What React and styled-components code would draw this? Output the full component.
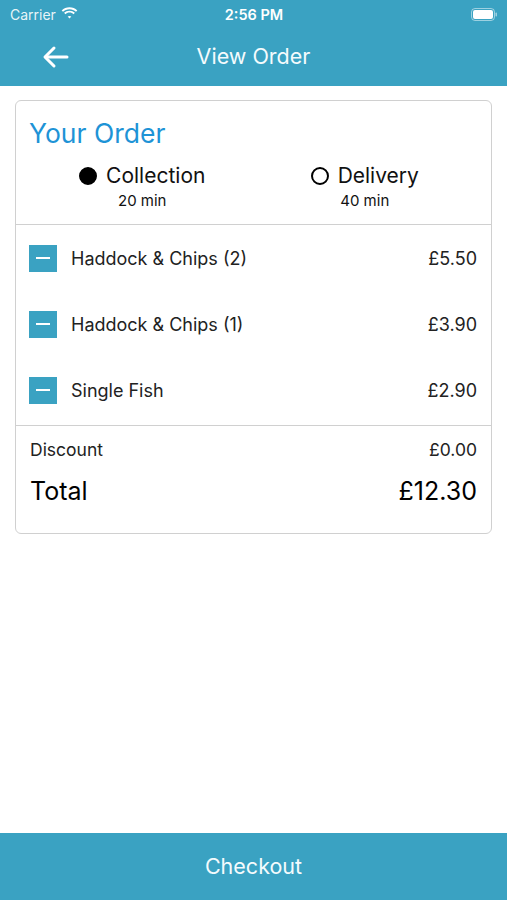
import React from 'react'
import styled, { createGlobalStyle } from 'styled-components'

const TEAL = '#3aa2c2'

const GlobalStyle = createGlobalStyle`
  html, body {
    margin: 0;
    padding: 0;
    background: #fff;
  }
  body {
    font-family: Inter, "Liberation Sans", sans-serif;
    color: #111;
  }
`

const items = [
  { name: 'Haddock & Chips (2)', price: '£5.50' },
  { name: 'Haddock & Chips (1)', price: '£3.90' },
  { name: 'Single Fish', price: '£2.90' },
]

const options = [
  { label: 'Collection', time: '20 min', selected: true },
  { label: 'Delivery', time: '40 min', selected: false },
]

export default function App () {
  return (<Page>
    <GlobalStyle />
    <Header>
      <StatusBar>
        <Carrier>
          Carrier
          <svg width="17" height="12" viewBox="0 0 17 12">
            <path d="M8.5 2.2c2.5 0 4.8 1 6.5 2.6l1.3-1.4C14.2 1.4 11.5.3 8.5.3S2.8 1.4.7 3.4L2 4.8c1.7-1.6 4-2.6 6.5-2.6z" fill="#fff" />
            <path d="M8.5 5.6c1.6 0 3 .6 4.1 1.6l1.3-1.4c-1.4-1.3-3.3-2.1-5.4-2.1s-4 .8-5.4 2.1l1.3 1.4c1.1-1 2.5-1.6 4.1-1.6z" fill="#fff" />
            <path d="M8.5 8.9c.7 0 1.3.3 1.8.7l-1.8 2-1.8-2c.5-.4 1.1-.7 1.8-.7z" fill="#fff" />
          </svg>
        </Carrier>
        <Clock>2:56 PM</Clock>
        <Battery>
          <svg width="27" height="13" viewBox="0 0 27 13">
            <rect x="0.5" y="0.5" width="23" height="12" rx="3.5" fill="none" stroke="rgba(255,255,255,0.5)" />
            <rect x="2" y="2" width="20" height="9" rx="2" fill="#fff" />
            <rect x="24.5" y="4.5" width="1.5" height="4" rx="0.7" fill="rgba(255,255,255,0.5)" />
          </svg>
        </Battery>
      </StatusBar>
      <NavBar>
        <BackButton aria-label="Back">
          <svg width="28" height="24" viewBox="0 0 28 24" fill="none" stroke="#fff" strokeWidth="3" strokeLinecap="round" strokeLinejoin="round">
            <path d="M25 12H4" />
            <path d="M12 3l-9 9 9 9" />
          </svg>
        </BackButton>
        <NavTitle>View Order</NavTitle>
      </NavBar>
    </Header>

    <Content>
      <Card>
        <CardTop>
          <Heading>Your Order</Heading>
          <Options>
            {options.map(opt => (
              <Option key={opt.label}>
                <OptionLine>
                  <Radio $selected={opt.selected} />
                  <OptionLabel>{opt.label}</OptionLabel>
                </OptionLine>
                <OptionTime>{opt.time}</OptionTime>
              </Option>
            ))}
          </Options>
        </CardTop>

        <ItemList>
          {items.map(item => (
            <ItemRow key={item.name}>
              <MinusButton aria-label="Remove" />
              <ItemName>{item.name}</ItemName>
              <Price>{item.price}</Price>
            </ItemRow>
          ))}
        </ItemList>

        <Summary>
          <SummaryRow>
            <span>Discount</span>
            <span>£0.00</span>
          </SummaryRow>
          <SummaryRow $big>
            <span>Total</span>
            <span>£12.30</span>
          </SummaryRow>
        </Summary>
      </Card>
    </Content>

    <Checkout>Checkout</Checkout>
  </Page>)
}

const Page = styled.div`
  height: 900px;
  display: flex;
  flex-direction: column;
  overflow: hidden;
`

const Header = styled.header`
  background-color: ${TEAL};
  color: #fff;
  height: 86px;
  display: flex;
  flex-direction: column;
`

const StatusBar = styled.div`
  height: 28px;
  display: grid;
  grid-template-columns: 1fr auto 1fr;
  align-items: center;
  padding: 0 9px 0 10px;
  font-size: 14px;
`

const Carrier = styled.div`
  display: flex;
  align-items: center;
  gap: 5px;
  color: rgba(255, 255, 255, 0.9);
  svg { margin-top: -2px; }
`

const Clock = styled.div`
  font-weight: 600;
  font-size: 14.5px;
`

const Battery = styled.div`
  display: flex;
  justify-content: flex-end;
`

const NavBar = styled.div`
  flex: 1;
  display: flex;
  align-items: center;
  justify-content: center;
  position: relative;
`

const BackButton = styled.button`
  position: absolute;
  left: 42px;
  top: 50%;
  transform: translateY(-50%);
  background: none;
  border: 0;
  padding: 0;
  display: flex;
`

const NavTitle = styled.div`
  font-size: 21.5px;
  margin-top: -2px;
  color: #f4fbfd;
`

const Content = styled.main`
  flex: 1;
  padding: 14px 15px;
`

const Card = styled.section`
  border: 1.5px solid #d0d0d0;
  border-radius: 6px;
  overflow: hidden;
`

const CardTop = styled.div`
  padding: 16px 15px 11px 13px;
  border-bottom: 1.5px solid #d0d0d0;
`

const Heading = styled.h2`
  margin: 0;
  font-weight: 400;
  font-size: 26.5px;
  line-height: 32px;
  color: #1e93d6;
`

const Options = styled.div`
  display: flex;
  margin-top: 15px;
  padding-left: 2px;
`

const Option = styled.div`
  flex: 1;
  display: flex;
  flex-direction: column;
  align-items: center;
`

const OptionLine = styled.div`
  display: flex;
  align-items: center;
  gap: 9px;
`

const Radio = styled.span`
  width: 18px;
  height: 18px;
  box-sizing: border-box;
  border-radius: 50%;
  border: 2px solid #000;
  background: ${({ $selected }) => $selected ? '#000' : 'transparent'};
`

const OptionLabel = styled.span`
  font-size: 21px;
  line-height: 24px;
`

const OptionTime = styled.span`
  font-size: 15px;
  line-height: 24px;
  padding-top: 1px;
`

const ItemList = styled.div`
  padding: 0 0 2px;
  border-bottom: 1.5px solid #d0d0d0;
`

const ItemRow = styled.div`
  display: flex;
  align-items: center;
  height: 66px;
  padding: 0 14px 0 13px;
`

const MinusButton = styled.button`
  width: 28px;
  height: 27px;
  border: 0;
  padding: 0;
  background-color: ${TEAL};
  position: relative;
  flex-shrink: 0;

  &::after {
    content: '';
    position: absolute;
    left: 7px;
    right: 7px;
    top: 12px;
    height: 2.5px;
    background: #fff;
  }
`

const ItemName = styled.span`
  flex: 1;
  margin-left: 14px;
  font-size: 18px;
  color: #222;
`

const Price = styled.span`
  font-size: 18px;
  color: #222;
`

const Summary = styled.div`
  padding: 12px 14px 26px 14px;
  display: flex;
  flex-direction: column;
  gap: 13px;
`

const SummaryRow = styled.div`
  display: flex;
  justify-content: space-between;
  align-items: center;
  font-size: ${({ $big }) => $big ? '25px' : '17.5px'};
  line-height: ${({ $big }) => $big ? '32px' : '24px'};
  color: ${({ $big }) => $big ? '#000' : '#222'};
`

const Checkout = styled.button`
  height: 67px;
  border: 0;
  background-color: ${TEAL};
  color: #f4fbfd;
  font-family: inherit;
  font-size: 21.5px;
  padding: 0 0 2px;
`
